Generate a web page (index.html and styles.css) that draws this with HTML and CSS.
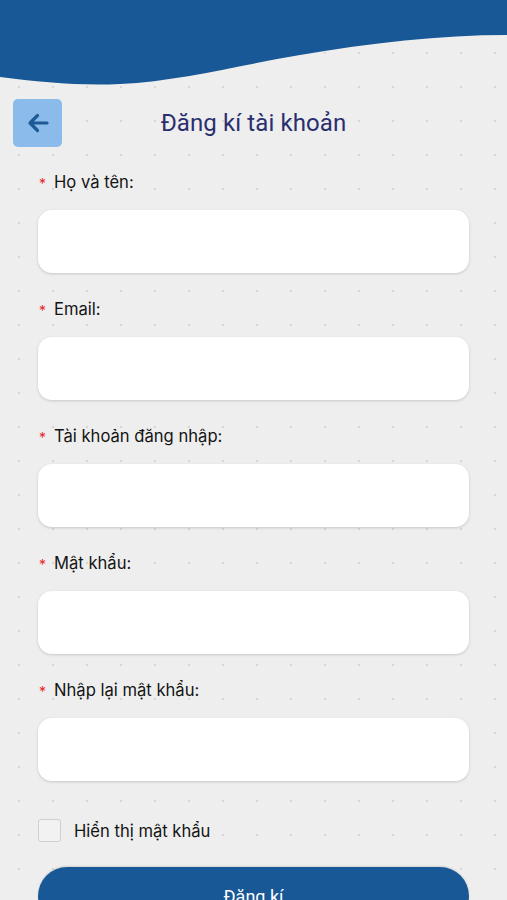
FILE: index.html
```html
<!DOCTYPE html>
<html lang="vi">
<head>
<meta charset="utf-8">
<title>Đăng kí tài khoản</title>
<link rel="stylesheet" href="styles.css">
</head>
<body>
<div class="page">
  <svg class="wave" width="507" height="86" viewBox="0 0 507 86" preserveAspectRatio="none">
    <path d="M0 0 H507 V35 C440 35 370 43 300 55 C240 65 180 81 120 84 C80 86 40 82 0 77 Z" fill="#185896"/>
  </svg>
  <div class="topbar">
    <button class="back" aria-label="Quay lại">
      <svg width="24" height="24" viewBox="0 0 24 24">
        <path d="M21 12 H4.5 M11.5 4.5 L4 12 L11.5 19.5" fill="none" stroke="#1d5a96" stroke-width="3.2" stroke-linecap="round" stroke-linejoin="round"/>
      </svg>
    </button>
    <h1 class="title">Đăng kí tài khoản</h1>
    <span></span>
  </div>
  <form class="form">
    <div class="field">
      <label class="label"><span class="req">*</span>Họ và tên:</label>
      <input class="input" type="text">
    </div>
    <div class="field">
      <label class="label"><span class="req">*</span>Email:</label>
      <input class="input" type="email">
    </div>
    <div class="field">
      <label class="label"><span class="req">*</span>Tài khoản đăng nhập:</label>
      <input class="input" type="text">
    </div>
    <div class="field">
      <label class="label"><span class="req">*</span>Mật khẩu:</label>
      <input class="input" type="password">
    </div>
    <div class="field">
      <label class="label"><span class="req">*</span>Nhập lại mật khẩu:</label>
      <input class="input" type="password">
    </div>
    <label class="check"><span class="box"></span>Hiển thị mật khẩu</label>
    <button class="submit" type="button">Đăng kí</button>
  </form>
</div>
</body>
</html>
```

FILE: styles.css
```css
* { box-sizing: border-box; }
html, body {
  margin: 0;
  padding: 0;
  height: 100%;
  overflow: hidden;
}
body {
  background-color: #eeeeee;
  background-image: radial-gradient(circle, #d6d6d6 0.9px, transparent 1.4px);
  background-size: 34px 34px;
  background-position: 2px 2px;
  font-family: Inter, "Noto Sans", sans-serif;
  color: #141414;
}
.page {
  width: 507px;
}
.wave {
  display: block;
  width: 507px;
  height: 86px;
}
.topbar {
  display: grid;
  grid-template-columns: 49px 1fr 49px;
  align-items: center;
  padding: 0 13px;
  margin-top: 13px;
  height: 48px;
}
.back {
  width: 49px;
  height: 48px;
  border: none;
  border-radius: 5px;
  background: #8bbbea;
  display: flex;
  align-items: center;
  justify-content: center;
  padding: 0;
}
.title {
  margin: 0;
  text-align: center;
  font-family: Roboto, "Noto Sans", sans-serif;
  font-weight: 400;
  font-size: 24px;
  color: #2a2e6e;
  letter-spacing: 0.1px;
}
.form {
  display: flex;
  flex-direction: column;
  padding: 0 38px;
  margin-top: 25px;
}
.field {
  display: flex;
  flex-direction: column;
  gap: 18px;
  margin-bottom: 26px;
}
.label {
  display: flex;
  align-items: center;
  height: 20px;
  font-size: 16.6px;
  color: #141414;
}
.req {
  color: #e8262b;
  font-size: 14px;
  width: 16px;
  padding-left: 1px;
  position: relative;
  top: 1px;
}
.input {
  display: block;
  width: 100%;
  height: 63px;
  border: none;
  border-radius: 14px;
  background: #ffffff;
  box-shadow: 0 1px 3px rgba(0, 0, 0, 0.16);
  outline: none;
}
.check {
  display: flex;
  align-items: center;
  gap: 13px;
  margin-top: 12px;
  height: 23px;
  font-size: 16.6px;
  color: #141414;
}
.box {
  width: 23px;
  height: 23px;
  border: 1.5px solid #d0d0d0;
  border-radius: 3px;
  background: #f2f2f2;
}
.submit {
  margin-top: 25px;
  width: 100%;
  height: 58px;
  border: none;
  border-radius: 29px;
  background: #185896;
  color: #ffffff;
  font-family: Roboto, "Noto Sans", sans-serif;
  font-size: 18px;
  box-shadow: 0 -1px 2px rgba(0, 0, 0, 0.12);
  padding: 0;
}
```
